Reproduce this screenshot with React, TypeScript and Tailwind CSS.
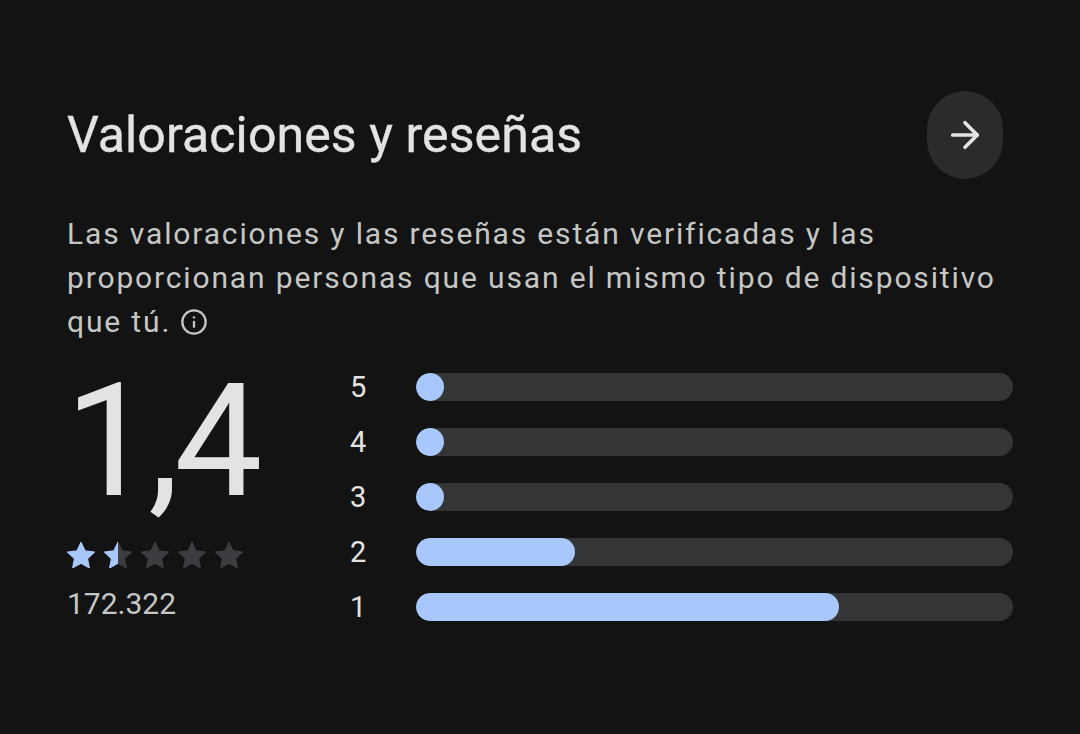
import { ArrowRight, Info } from "lucide-react";

const BARS = [
  { label: "5", pct: 0 },
  { label: "4", pct: 0 },
  { label: "3", pct: 0 },
  { label: "2", pct: 26.6 },
  { label: "1", pct: 70.9 },
];

const STAR = "M12 2.5l2.9 6.1 6.6.8-4.9 4.6 1.3 6.6L12 17.3l-5.9 3.3 1.3-6.6-4.9-4.6 6.6-.8z";

function Star({ fill }: { fill: "full" | "half" | "empty" }) {
  const blue = "#a8c7fa";
  const gray = "#3c3d40";
  return (
    <svg width="28" height="26" viewBox="2.5 2.3 19 18.4">
      <defs>
        <clipPath id="star-left-half">
          <rect x="0" y="0" width="12" height="24" />
        </clipPath>
      </defs>
      <path d={STAR} fill={fill === "full" ? blue : gray} stroke={fill === "full" ? blue : gray} strokeWidth="0.8" strokeLinejoin="round" />
      {fill === "half" && (
        <path d={STAR} fill={blue} stroke={blue} strokeWidth="0.8" strokeLinejoin="round" clipPath="url(#star-left-half)" />
      )}
    </svg>
  );
}

export default function App() {
  return (
    <div className="w-[1080px] h-[734px] bg-[#131313] text-[#e3e3e3] font-['Roboto',sans-serif] pl-[67px] pr-[67px] pt-[91px]">
      <div className="flex items-start justify-between">
        <h1 className="text-[50px] leading-[88px] text-[#e3e3e3] font-normal tracking-[0.1px] [-webkit-text-stroke:0.4px_#e3e3e3]">
          Valoraciones y reseñas
        </h1>
        <button className="w-[76px] h-[88px] rounded-full bg-[#2a2b2d] flex items-center justify-center mr-[10px]">
          <ArrowRight size={42} strokeWidth={2.1} color="#e3e3e3" />
        </button>
      </div>

      <p className="mt-[33px] text-[30px] leading-[44px] tracking-[1.85px] text-[#c4c7c5]">
        Las valoraciones y las reseñas están verificadas y las proporcionan personas que usan el mismo tipo de dispositivo
        que tú.{" "}
        <Info size={28} strokeWidth={2} className="inline-block align-[-4px]" />
      </p>

      <div className="flex">
        <div className="w-[283px] pt-[19px]">
          <div className="text-[157px] leading-[157px] font-normal tracking-[-5px] -ml-[2px]">1,4</div>
          <div className="flex gap-[9px] mt-[22px]">
            <Star fill="full" />
            <Star fill="half" />
            <Star fill="empty" />
            <Star fill="empty" />
            <Star fill="empty" />
          </div>
          <div className="text-[30px] leading-[40px] text-[#c4c7c5] mt-[16px]">172.322</div>
        </div>
        <div className="flex-1 flex flex-col gap-[27px] pt-[29px]">
          {BARS.map((b) => (
            <div key={b.label} className="flex items-center">
              <span className="w-[66px] text-[29px] leading-[28px] text-[#e3e3e3]">{b.label}</span>
              <div className="flex-1 h-[28px] rounded-full bg-[#333537] overflow-hidden">
                <div className="h-full rounded-full bg-[#a8c7fa] min-w-[28px]" style={{ width: `${b.pct}%` }} />
              </div>
            </div>
          ))}
        </div>
      </div>
    </div>
  );
}
